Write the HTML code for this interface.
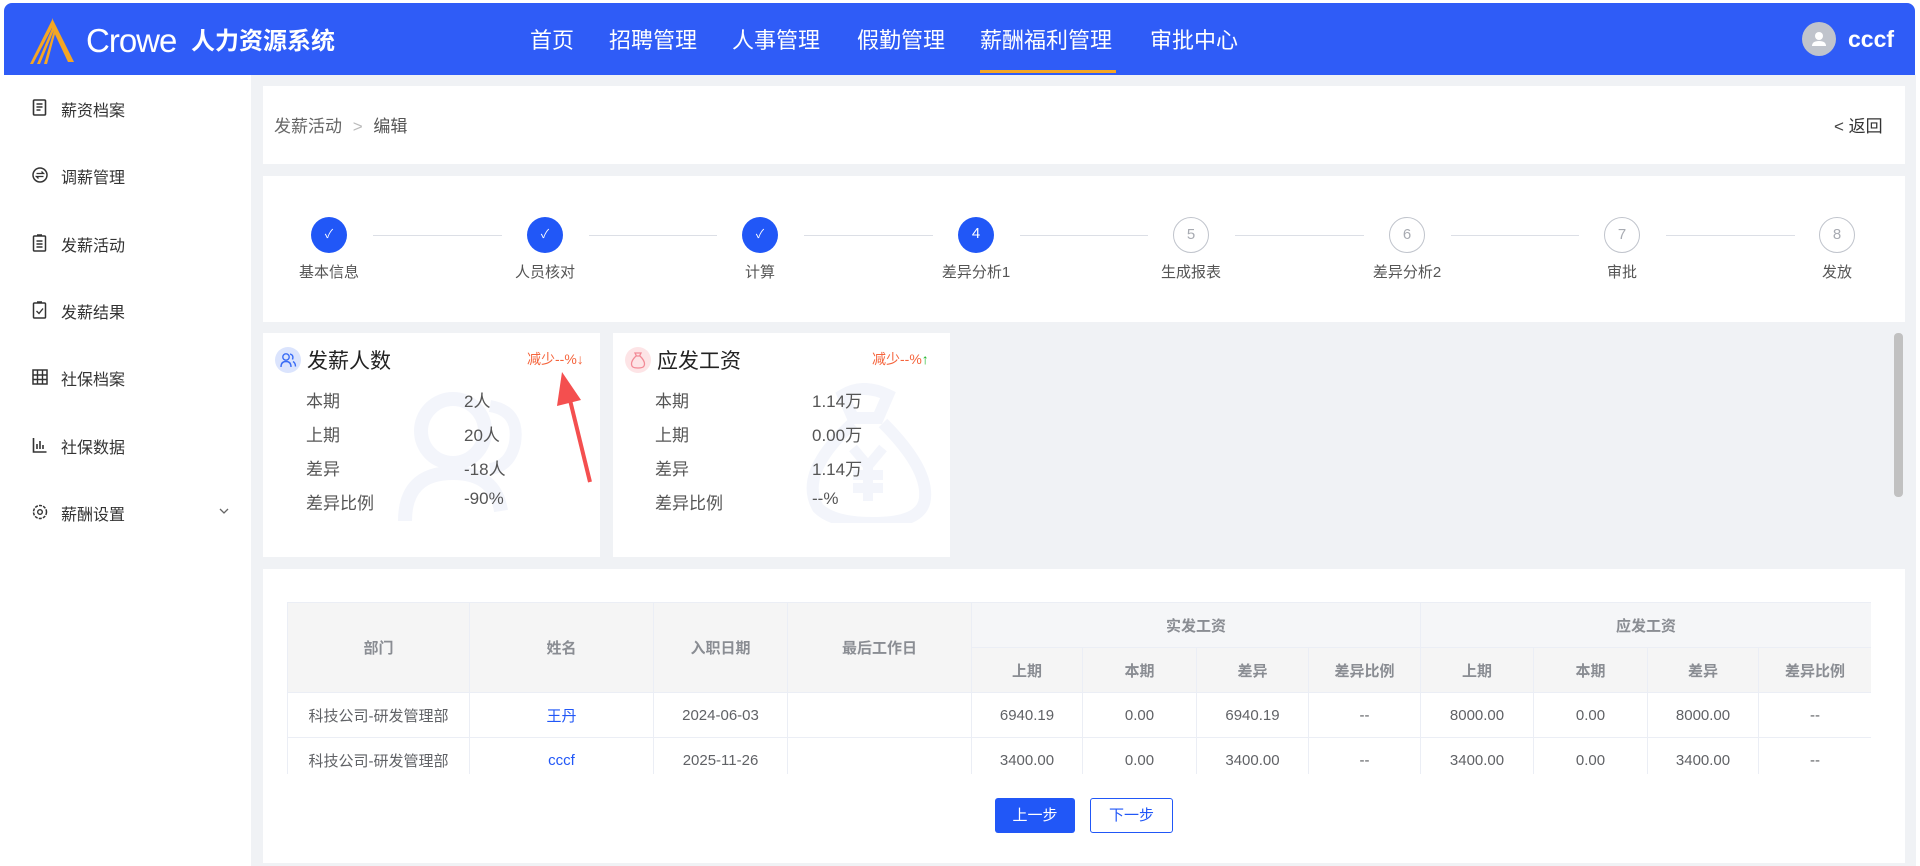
<!DOCTYPE html>
<html><head><meta charset="utf-8">
<style>
*{box-sizing:border-box;margin:0;padding:0}
body{width:1920px;height:866px;background:#fff;font-family:"Liberation Sans","Noto Sans CJK SC",sans-serif;position:relative;overflow:hidden;color:#333}
.abs{position:absolute}
#hdr{left:4px;top:3px;width:1911px;height:72px;background:#2f5cf7;border-radius:8px 8px 0 0}
.nav{position:absolute;top:20px;color:#fff;font-size:22px;white-space:nowrap}
#side{left:4px;top:75px;width:247px;height:791px;background:#fff}
.mi{position:absolute;left:57px;font-size:16px;color:#333}
.ic{position:absolute;left:28px;width:16px;height:18px}
#main{left:251px;top:75px;width:1665px;height:791px;background:#f0f2f5}
.card{position:absolute;background:#fff}
.step{position:absolute;width:36px;height:36px;border-radius:50%;top:217px;text-align:center;line-height:34px;font-size:15px}
.done{background:#2157f7;color:#fff}
.todo{border:1px solid #c0c4cc;color:#a8abb2;background:#fff}
.sl{position:absolute;top:261px;font-size:15px;color:#555;transform:translateX(-50%);white-space:nowrap}
.ln{position:absolute;top:235px;height:1px;background:#dcdfe6}
.row{position:absolute;font-size:17px;color:#555}
table{border-collapse:collapse;position:absolute;left:287px;top:602px;width:1584px;font-size:15px;table-layout:fixed}
td,th{border:1px solid #ebeef5;text-align:center;color:#606266;font-weight:normal}
th{background:#f5f5f5;color:#8a8d93;font-weight:bold}
</style></head><body>
<div id="hdr" class="abs">
 <svg class="abs" style="left:24px;top:15px" width="46" height="46" viewBox="0 0 46 46"><path d="M24 0 L46 44 L40 44 L24 10 Z" fill="#f5a623"/><path d="M24 2 L2 46 L5 46 L25 8 Z M25 8 L9 46 L12 46 L26 12Z M26 12 L16 46 L19 46 L27 16Z" fill="#f5a623"/></svg>
 <div class="abs" style="left:82px;top:18px;color:#fff;font-size:33px;letter-spacing:-1px;line-height:40px">Crowe</div>
 <div class="abs" style="left:187px;top:22px;color:#fff;font-size:24px;font-weight:bold;line-height:34px">人力资源系统</div>
 <div class="nav" style="left:526px">首页</div>
 <div class="nav" style="left:605px">招聘管理</div>
 <div class="nav" style="left:728px">人事管理</div>
 <div class="nav" style="left:853px">假勤管理</div>
 <div class="nav" style="left:976px">薪酬福利管理</div>
 <div class="abs" style="left:976px;top:67px;width:136px;height:3px;background:#f5a623"></div>
 <div class="nav" style="left:1146px">审批中心</div>
 <div class="abs" style="left:1798px;top:19px;width:34px;height:34px;border-radius:50%;background:#c0c4cc"><svg width="34" height="34"><circle cx="17" cy="14" r="4" fill="#fff"/><path d="M10 24 Q10 19 17 19 Q24 19 24 24Z" fill="#fff"/></svg></div>
 <div class="abs" style="left:1844px;top:23px;color:#fff;font-size:23px;font-weight:bold">cccf</div>
</div>
<div id="side" class="abs">
 <svg class="ic" style="top:24px" viewBox="0 0 16 18"><rect x="1.5" y="1" width="12" height="15" rx="1" fill="none" stroke="#333" stroke-width="1.6"/><path d="M4.5 5h6M4.5 8h6M4.5 11h4" stroke="#333" stroke-width="1.4"/></svg><div class="mi" style="top:22px">薪资档案</div>
 <svg class="ic" style="top:91px" viewBox="0 0 16 18"><circle cx="8" cy="9" r="7" fill="none" stroke="#333" stroke-width="1.5"/><path d="M4.5 7.5h7l-2-2M11.5 10.5h-7l2 2" fill="none" stroke="#333" stroke-width="1.3"/></svg><div class="mi" style="top:89px">调薪管理</div>
 <svg class="ic" style="top:159px" viewBox="0 0 16 18"><rect x="1.5" y="2" width="12" height="15" rx="1" fill="none" stroke="#333" stroke-width="1.5"/><path d="M4.5 7h6M4.5 10h6M4.5 13h6M5 1h5" stroke="#333" stroke-width="1.4"/></svg><div class="mi" style="top:157px">发薪活动</div>
 <svg class="ic" style="top:226px" viewBox="0 0 16 18"><rect x="1.5" y="2" width="12" height="15" rx="1" fill="none" stroke="#333" stroke-width="1.5"/><path d="M4.5 10l2.5 2.5 4-5M5 1h5" fill="none" stroke="#333" stroke-width="1.4"/></svg><div class="mi" style="top:224px">发薪结果</div>
 <svg class="ic" style="top:293px" viewBox="0 0 16 18"><rect x="1" y="2" width="14" height="14" fill="none" stroke="#333" stroke-width="1.5"/><path d="M1 7h14M1 11.5h14M5.5 2v14M10.5 2v14" stroke="#333" stroke-width="1.4"/></svg><div class="mi" style="top:291px">社保档案</div>
 <svg class="ic" style="top:361px" viewBox="0 0 16 18"><path d="M1.5 2v14h13M5 13V8M8 13V5M11 13V9" fill="none" stroke="#333" stroke-width="1.6"/></svg><div class="mi" style="top:359px">社保数据</div>
 <svg class="ic" style="top:428px" viewBox="0 0 16 18"><circle cx="8" cy="9" r="6.5" fill="none" stroke="#333" stroke-width="1.5" stroke-dasharray="3 1.2"/><circle cx="8" cy="9" r="2.3" fill="none" stroke="#333" stroke-width="1.4"/></svg><div class="mi" style="top:426px">薪酬设置</div>
 <svg class="abs" style="left:214px;top:431px" width="12" height="10"><path d="M2 3l4 4 4-4" fill="none" stroke="#666" stroke-width="1.3"/></svg>
</div>
<div id="main" class="abs"></div>
<div class="card" style="left:263px;top:86px;width:1642px;height:78px">
 <div class="abs" style="left:11px;top:26px;font-size:17px;color:#666">发薪活动 <span style="color:#bbb;margin:0 6px">&gt;</span> <span style="color:#555">编辑</span></div>
 <div class="abs" style="left:1571px;top:26px;font-size:17px;color:#333"><span style="color:#444">&lt;</span> 返回</div>
</div>
<div class="card" style="left:263px;top:176px;width:1642px;height:146px"></div>
<div class="ln" style="left:373px;width:129px"></div><div class="ln" style="left:589px;width:128px"></div><div class="ln" style="left:804px;width:129px"></div><div class="ln" style="left:1020px;width:128px"></div><div class="ln" style="left:1235px;width:129px"></div><div class="ln" style="left:1451px;width:128px"></div><div class="ln" style="left:1666px;width:129px"></div>
<div class="step done" style="left:311px;font-size:12px">✓</div><div class="step done" style="left:527px;font-size:12px">✓</div><div class="step done" style="left:742px;font-size:12px">✓</div><div class="step done" style="left:958px">4</div>
<div class="step todo" style="left:1173px">5</div><div class="step todo" style="left:1389px">6</div><div class="step todo" style="left:1604px">7</div><div class="step todo" style="left:1819px">8</div>
<div class="sl" style="left:329px">基本信息</div><div class="sl" style="left:545px">人员核对</div><div class="sl" style="left:760px">计算</div><div class="sl" style="left:976px">差异分析1</div><div class="sl" style="left:1191px">生成报表</div><div class="sl" style="left:1407px">差异分析2</div><div class="sl" style="left:1622px">审批</div><div class="sl" style="left:1837px">发放</div>

<div class="card" style="left:263px;top:333px;width:337px;height:224px;overflow:hidden">
 <svg class="abs" style="left:132px;top:48px" width="140" height="140"><circle cx="58" cy="50" r="32" fill="none" stroke="#f3f5fb" stroke-width="14"/><path d="M10 140 Q10 92 58 92 Q100 92 106 130" fill="none" stroke="#f3f5fb" stroke-width="14"/><path d="M95 25 Q125 30 120 62 Q115 85 95 88" fill="none" stroke="#f3f5fb" stroke-width="12"/></svg>
 <div class="abs" style="left:12px;top:14px;width:26px;height:26px;border-radius:50%;background:#dbe4fd"><svg width="26" height="26"><circle cx="11" cy="10" r="3.2" fill="none" stroke="#3a6cf5" stroke-width="1.4"/><path d="M6 20 Q6 14.5 11 14.5 Q16 14.5 16 20M15 7 Q19 8 17.5 12.5M18 14.5 Q20.5 16 20.5 19.5" fill="none" stroke="#3a6cf5" stroke-width="1.4"/></svg></div>
 <div class="abs" style="left:44px;top:12px;font-size:21px;color:#222">发薪人数</div>
 <div class="abs" style="left:264px;top:16px;font-size:14px;color:#f5643c">减少--%<span style="font-weight:bold">↓</span></div>
 <div class="row" style="left:43px;top:54px">本期</div><div class="row" style="left:201px;top:54px">2人</div>
 <div class="row" style="left:43px;top:88px">上期</div><div class="row" style="left:201px;top:88px">20人</div>
 <div class="row" style="left:43px;top:122px">差异</div><div class="row" style="left:201px;top:122px">-18人</div>
 <div class="row" style="left:43px;top:156px">差异比例</div><div class="row" style="left:201px;top:156px">-90%</div>
</div>
<div class="card" style="left:613px;top:333px;width:337px;height:224px;overflow:hidden">
 <svg class="abs" style="left:190px;top:50px" width="140" height="140"><path d="M40 12 Q60 0 85 12 L75 35 L50 35 Z" fill="none" stroke="#f3f5fb" stroke-width="12"/><path d="M50 40 Q-5 90 15 125 Q30 140 70 140 Q120 140 122 115 Q125 85 80 40" fill="none" stroke="#f3f5fb" stroke-width="12"/><path d="M50 65l15 18 15-18M65 83v35M50 92h30M50 105h30" fill="none" stroke="#f3f5fb" stroke-width="10"/></svg>
 <div class="abs" style="left:12px;top:14px;width:26px;height:26px;border-radius:50%;background:#fde4e6"><svg width="26" height="26"><path d="M10 6h6l-1.5 3h-3Z M11 9 Q5 15 7 19 Q8 21 13 21 Q18 21 19 19 Q21 15 15 9" fill="none" stroke="#f28a96" stroke-width="1.3"/></svg></div>
 <div class="abs" style="left:44px;top:12px;font-size:21px;color:#222">应发工资</div>
 <div class="abs" style="left:259px;top:16px;font-size:14px;color:#f5643c">减少--%<span style="color:#19b526;font-weight:bold">↑</span></div>
 <div class="row" style="left:42px;top:54px">本期</div><div class="row" style="left:199px;top:54px">1.14万</div>
 <div class="row" style="left:42px;top:88px">上期</div><div class="row" style="left:199px;top:88px">0.00万</div>
 <div class="row" style="left:42px;top:122px">差异</div><div class="row" style="left:199px;top:122px">1.14万</div>
 <div class="row" style="left:42px;top:156px">差异比例</div><div class="row" style="left:199px;top:156px">--%</div>
</div>
<svg class="abs" style="left:540px;top:360px" width="70" height="130"><path d="M50 122 L30 40" stroke="#f44f4f" stroke-width="4"/><path d="M22 12 L17 46 L41 40Z" fill="#f44f4f"/></svg>
<div class="abs" style="left:1894px;top:333px;width:9px;height:164px;background:#c1c1c1;border-radius:4px"></div>

<div class="card" style="left:263px;top:569px;width:1642px;height:294px"></div>
<div class="abs" style="left:287px;top:602px;width:1584px;height:172px;overflow:hidden">
<table style="left:0;top:0">
<colgroup><col style="width:182px"><col style="width:184px"><col style="width:134px"><col style="width:184px"><col style="width:111px"><col style="width:114px"><col style="width:112px"><col style="width:112px"><col style="width:113px"><col style="width:114px"><col style="width:111px"><col style="width:113px"></colgroup>
<tr style="height:45px"><th rowspan="2">部门</th><th rowspan="2">姓名</th><th rowspan="2">入职日期</th><th rowspan="2">最后工作日</th><th colspan="4" style="background:#f5f6f8">实发工资</th><th colspan="4" style="background:#f5f6f8">应发工资</th></tr>
<tr style="height:45px"><th>上期</th><th>本期</th><th>差异</th><th>差异比例</th><th>上期</th><th>本期</th><th>差异</th><th>差异比例</th></tr>
<tr style="height:45px"><td>科技公司-研发管理部</td><td style="color:#2157f7">王丹</td><td>2024-06-03</td><td></td><td>6940.19</td><td>0.00</td><td>6940.19</td><td>--</td><td>8000.00</td><td>0.00</td><td>8000.00</td><td>--</td></tr>
<tr style="height:45px"><td>科技公司-研发管理部</td><td style="color:#2157f7">cccf</td><td>2025-11-26</td><td></td><td>3400.00</td><td>0.00</td><td>3400.00</td><td>--</td><td>3400.00</td><td>0.00</td><td>3400.00</td><td>--</td></tr>
</table></div>
<div class="abs" style="left:995px;top:798px;width:80px;height:35px;background:#2157f7;border-radius:3px;color:#fff;font-size:15px;text-align:center;line-height:35px">上一步</div>
<div class="abs" style="left:1090px;top:798px;width:83px;height:35px;border:1px solid #2157f7;border-radius:3px;color:#2157f7;font-size:15px;text-align:center;line-height:33px">下一步</div>
</body></html>
